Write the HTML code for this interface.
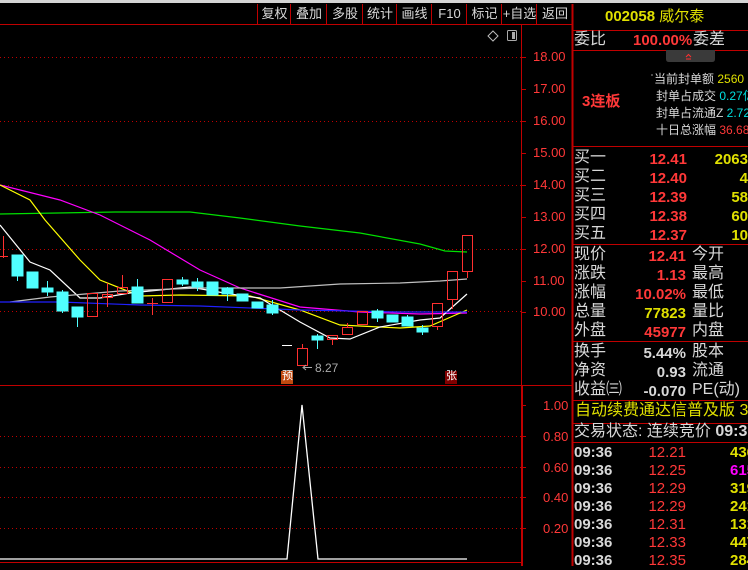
<!DOCTYPE html>
<html><head><meta charset="utf-8"><style>
*{margin:0;padding:0}
body{width:748px;height:566px;background:#000;overflow:hidden;position:relative;font-family:"Liberation Sans","Noto Sans CJK SC",sans-serif;}
.t{position:absolute;white-space:nowrap;line-height:1;}
.g{color:#d8d8d8}.r{color:#ff3838}.y{color:#e0e000}.c{color:#00e0e0}.m{color:#ff00ff}
.btn{position:absolute;top:4px;height:20px;color:#d8d8d8;font-size:13px;line-height:20px;text-align:center;border-left:1px solid #c00000}
.row{font-size:16px}
.num{font-weight:bold;font-size:15px}
</style></head><body>
<div style="position:absolute;left:0;top:0;width:748px;height:3px;background:#d4d4d4"></div>
<div class="btn" style="left:257px;width:33px">复权</div>
<div class="btn" style="left:290px;width:36px">叠加</div>
<div class="btn" style="left:326px;width:36px">多股</div>
<div class="btn" style="left:362px;width:34px">统计</div>
<div class="btn" style="left:396px;width:35px">画线</div>
<div class="btn" style="left:431px;width:35px">F10</div>
<div class="btn" style="left:466px;width:35px">标记</div>
<div class="btn" style="left:501px;width:35px">+自选</div>
<div class="btn" style="left:536px;width:36px">返回</div>
<svg width="748" height="566" style="position:absolute;left:0;top:0" xmlns="http://www.w3.org/2000/svg">
<g stroke="#c00000" fill="none">
<line x1="0" y1="24.5" x2="572" y2="24.5"/>
<line x1="521.5" y1="25" x2="521.5" y2="566"/>
<line x1="522.5" y1="385" x2="522.5" y2="566"/>
<line x1="572.5" y1="4" x2="572.5" y2="566" stroke-width="2"/>
<line x1="0" y1="385.5" x2="572" y2="385.5"/>
<line x1="0" y1="562.5" x2="521" y2="562.5"/>
<line x1="573" y1="30.5" x2="748" y2="30.5"/>
<line x1="573" y1="50.5" x2="748" y2="50.5"/>
<line x1="573" y1="146.5" x2="748" y2="146.5"/>
<line x1="573" y1="244.5" x2="748" y2="244.5"/>
<line x1="573" y1="341.5" x2="748" y2="341.5"/>
<line x1="573" y1="400.5" x2="748" y2="400.5"/>
<line x1="573" y1="423.5" x2="748" y2="423.5"/>
<line x1="573" y1="442.5" x2="748" y2="442.5"/>
</g>
<g stroke="#c00000" stroke-dasharray="1,3">
<line x1="0" y1="57.5" x2="521" y2="57.5"/><line x1="0" y1="121.5" x2="521" y2="121.5"/>
<line x1="0" y1="185.5" x2="521" y2="185.5"/><line x1="0" y1="249.5" x2="521" y2="249.5"/>
<line x1="0" y1="311.5" x2="521" y2="311.5"/>
<line x1="0" y1="436.5" x2="521" y2="436.5"/><line x1="0" y1="467.5" x2="521" y2="467.5"/>
<line x1="0" y1="497.5" x2="521" y2="497.5"/><line x1="0" y1="528.5" x2="521" y2="528.5"/>
</g>
<g stroke="#c00000">
<line x1="522" y1="57.5" x2="526" y2="57.5"/><line x1="522" y1="89.5" x2="526" y2="89.5"/><line x1="522" y1="121.5" x2="526" y2="121.5"/><line x1="522" y1="153.5" x2="526" y2="153.5"/><line x1="522" y1="185.5" x2="526" y2="185.5"/><line x1="522" y1="217.5" x2="526" y2="217.5"/><line x1="522" y1="249.5" x2="526" y2="249.5"/><line x1="522" y1="281.5" x2="526" y2="281.5"/><line x1="522" y1="312.5" x2="526" y2="312.5"/>
<line x1="522" y1="405.5" x2="526" y2="405.5"/><line x1="522" y1="436.5" x2="526" y2="436.5"/><line x1="522" y1="467.5" x2="526" y2="467.5"/><line x1="522" y1="497.5" x2="526" y2="497.5"/><line x1="522" y1="528.5" x2="526" y2="528.5"/>
</g>
<g fill="none" stroke-width="1.2">
<polyline stroke="#00e000" points="0,214 115,212 190,212 240,218 300,226 360,233 420,244 445,251 467,252"/>
<polyline stroke="#ff00ff" points="0,185 60,200 100,215 150,240 200,270 240,288 300,307 360,312 420,314 467,313"/>
<polyline stroke="#ffff00" points="0,185 30,200 45,220 80,260 100,280 140,296 180,295 250,296 300,310 340,325 400,328 430,326 467,310"/>
<polyline stroke="#ffffff" points="0,225 30,262 50,270 80,298 100,298 130,293 190,287 230,294 260,298 300,322 330,338 350,339 380,327 420,320 440,318 467,294"/>
<polyline stroke="#c0c0c0" points="10,302 50,297 120,291 200,288 280,288 340,284 400,283 440,281 467,279"/>
<polyline stroke="#2020ff" points="0,302 60,302 140,305 200,306 300,310 400,312 467,312"/>
</g>
<g fill="#50ffff" stroke="#50ffff">
<line x1="17.5" y1="255" x2="17.5" y2="281"/><rect x="12" y="255" width="11" height="21"/>
<rect x="27" y="272" width="11" height="16"/>
<line x1="47.5" y1="281" x2="47.5" y2="296"/><rect x="42" y="288" width="11" height="4"/>
<line x1="62.5" y1="290" x2="62.5" y2="313"/><rect x="57" y="292" width="11" height="19"/>
<line x1="77.5" y1="307" x2="77.5" y2="327"/><rect x="72" y="307" width="11" height="10"/>
<line x1="137.5" y1="279" x2="137.5" y2="303"/><rect x="132" y="287" width="11" height="16"/>
<line x1="182.5" y1="277" x2="182.5" y2="286"/><rect x="177" y="280" width="11" height="4"/>
<line x1="197.5" y1="278" x2="197.5" y2="291"/><rect x="192" y="282" width="11" height="5"/>
<rect x="207" y="282" width="11" height="13"/>
<line x1="227.5" y1="287" x2="227.5" y2="301"/><rect x="222" y="288" width="11" height="6"/>
<rect x="237" y="294" width="11" height="7"/>
<rect x="252" y="302" width="11" height="6"/>
<line x1="272.5" y1="300" x2="272.5" y2="315"/><rect x="267" y="305" width="11" height="8"/>
<line x1="317.5" y1="334" x2="317.5" y2="349"/><rect x="312" y="336" width="11" height="4"/>
<line x1="377.5" y1="309" x2="377.5" y2="322"/><rect x="372" y="311" width="11" height="7"/>
<rect x="387" y="315" width="11" height="7"/>
<line x1="407.5" y1="315" x2="407.5" y2="326"/><rect x="402" y="317" width="11" height="9"/>
<line x1="422.5" y1="325" x2="422.5" y2="335"/><rect x="417" y="328" width="11" height="4"/>
</g>
<g fill="none" stroke="#ff3030">
<line x1="3.5" y1="236" x2="3.5" y2="258"/><line x1="0" y1="256.5" x2="8" y2="256.5"/>
<rect x="87.5" y="293.5" width="10" height="23"/>
<line x1="107.5" y1="283" x2="107.5" y2="307"/><rect x="102.5" y="294.5" width="10" height="3"/>
<line x1="122.5" y1="275" x2="122.5" y2="287"/><rect x="117.5" y="287.5" width="10" height="6"/>
<line x1="152.5" y1="298" x2="152.5" y2="315"/><line x1="147" y1="303.5" x2="158" y2="303.5"/>
<rect x="162.5" y="279.5" width="10" height="23"/>
<line x1="302.5" y1="344" x2="302.5" y2="348"/><rect x="297.5" y="348.5" width="10" height="17"/>
<line x1="332.5" y1="339" x2="332.5" y2="345"/><rect x="327.5" y="335.5" width="10" height="4"/>
<line x1="347.5" y1="323" x2="347.5" y2="327"/><rect x="342.5" y="327.5" width="10" height="7"/>
<rect x="357.5" y="311.5" width="10" height="13"/>
<line x1="437.5" y1="326" x2="437.5" y2="330"/><rect x="432.5" y="303.5" width="10" height="23"/>
<line x1="452.5" y1="299" x2="452.5" y2="309"/><rect x="447.5" y="271.5" width="10" height="28"/>
<line x1="467.5" y1="271" x2="467.5" y2="278"/><rect x="462.5" y="235.5" width="10" height="36"/>
</g>
<line x1="282" y1="345.5" x2="292" y2="345.5" stroke="#fff"/>
<line x1="304" y1="367.5" x2="312" y2="367.5" stroke="#aaa"/><polyline points="306,365 303,367.5 306,370" fill="none" stroke="#aaa"/>
<rect x="281" y="371" width="12" height="13" fill="#c04a10"/>
<rect x="445" y="371" width="12" height="13" fill="#800000"/>
<polyline fill="none" stroke="#fff" stroke-width="1.3" points="0,559 287,559 302,405 318,559 467,559"/>
<path d="M493 31 l5 5 -5 5 -5 -5z" fill="none" stroke="#bbb"/>
<rect x="507.5" y="30.5" width="9" height="10" rx="1" fill="none" stroke="#aaa"/><rect x="512" y="32" width="3" height="7" fill="#aaa"/>
<path d="M666 50 h49 v9 q0 3 -3 3 h-43 q-3 0 -3 -3z" fill="#3a3a3a"/>
<polyline points="686,57 688.5,54.5 691,57" fill="none" stroke="#ff3030"/>
<line x1="686" y1="59" x2="691" y2="59" stroke="#ff3030"/>
</svg>
<div class="t r" style="left:533px;top:50px;font-size:13px">18.00</div>
<div class="t r" style="left:533px;top:82px;font-size:13px">17.00</div>
<div class="t r" style="left:533px;top:114px;font-size:13px">16.00</div>
<div class="t r" style="left:533px;top:146px;font-size:13px">15.00</div>
<div class="t r" style="left:533px;top:178px;font-size:13px">14.00</div>
<div class="t r" style="left:533px;top:210px;font-size:13px">13.00</div>
<div class="t r" style="left:533px;top:242px;font-size:13px">12.00</div>
<div class="t r" style="left:533px;top:274px;font-size:13px">11.00</div>
<div class="t r" style="left:533px;top:305px;font-size:13px">10.00</div>
<div class="t r" style="left:543px;top:399px;font-size:13px">1.00</div>
<div class="t r" style="left:543px;top:430px;font-size:13px">0.80</div>
<div class="t r" style="left:543px;top:461px;font-size:13px">0.60</div>
<div class="t r" style="left:543px;top:491px;font-size:13px">0.40</div>
<div class="t r" style="left:543px;top:522px;font-size:13px">0.20</div>
<div class="t" style="left:315px;top:362px;font-size:12px;color:#aaa">8.27</div>
<div class="t" style="left:282px;top:371px;font-size:11px;color:#fff">预</div>
<div class="t" style="left:446px;top:371px;font-size:11px;color:#fff">张</div>

<div class="t y" style="left:605px;top:9px;font-size:15px"><b>002058</b> 威尔泰</div>
<div class="t g row" style="left:574px;top:32px">委比</div>
<div class="t r num" style="left:633px;top:33px">100.00%</div>
<div class="t g row" style="left:693px;top:32px">委差</div>
<div class="t r" style="left:582px;top:94px;font-size:15px;font-weight:bold">3连板</div>
<div class="t g" style="left:650px;top:73px;font-size:12px">ˈ当前封单额 <span class="y">2560</span></div>
<div class="t g" style="left:656px;top:90px;font-size:12px">封单占成交 <span class="c">0.27亿</span></div>
<div class="t g" style="left:656px;top:107px;font-size:12px">封单占流通Z <span class="c">2.72</span></div>
<div class="t g" style="left:656px;top:124px;font-size:12px">十日总涨幅 <span class="r">36.68</span></div>

<div style="position:absolute;left:574px;top:150px;width:174px">
<div style="position:relative;height:19px"><span class="t g row" style="left:0;top:0">买一</span><span class="t r num" style="right:61px;top:2px">12.41</span><span class="t y num" style="right:0;top:2px">2063</span></div>
<div style="position:relative;height:19px"><span class="t g row" style="left:0;top:0">买二</span><span class="t r num" style="right:61px;top:2px">12.40</span><span class="t y num" style="right:0;top:2px">4</span></div>
<div style="position:relative;height:19px"><span class="t g row" style="left:0;top:0">买三</span><span class="t r num" style="right:61px;top:2px">12.39</span><span class="t y num" style="right:0;top:2px">58</span></div>
<div style="position:relative;height:19px"><span class="t g row" style="left:0;top:0">买四</span><span class="t r num" style="right:61px;top:2px">12.38</span><span class="t y num" style="right:0;top:2px">60</span></div>
<div style="position:relative;height:19px"><span class="t g row" style="left:0;top:0">买五</span><span class="t r num" style="right:61px;top:2px">12.37</span><span class="t y num" style="right:0;top:2px">10</span></div>
</div>
<div style="position:absolute;left:574px;top:247px;width:174px">
<div style="position:relative;height:19px"><span class="t g row" style="left:0;top:0">现价</span><span class="t r num" style="right:62px;top:2px">12.41</span><span class="t g row" style="left:118px;top:0">今开</span></div>
<div style="position:relative;height:19px"><span class="t g row" style="left:0;top:0">涨跌</span><span class="t r num" style="right:62px;top:2px">1.13</span><span class="t g row" style="left:118px;top:0">最高</span></div>
<div style="position:relative;height:19px"><span class="t g row" style="left:0;top:0">涨幅</span><span class="t r num" style="right:62px;top:2px">10.02%</span><span class="t g row" style="left:118px;top:0">最低</span></div>
<div style="position:relative;height:19px"><span class="t g row" style="left:0;top:0">总量</span><span class="t y num" style="right:62px;top:2px">77823</span><span class="t g row" style="left:118px;top:0">量比</span></div>
<div style="position:relative;height:19px"><span class="t g row" style="left:0;top:0">外盘</span><span class="t r num" style="right:62px;top:2px">45977</span><span class="t g row" style="left:118px;top:0">内盘</span></div>
</div>
<div style="position:absolute;left:574px;top:344px;width:174px">
<div style="position:relative;height:19px"><span class="t g row" style="left:0;top:0">换手</span><span class="t g num" style="right:62px;top:2px">5.44%</span><span class="t g row" style="left:118px;top:0">股本</span></div>
<div style="position:relative;height:19px"><span class="t g row" style="left:0;top:0">净资</span><span class="t g num" style="right:62px;top:2px">0.93</span><span class="t g row" style="left:118px;top:0">流通</span></div>
<div style="position:relative;height:19px"><span class="t g row" style="left:0;top:0">收益㈢</span><span class="t g num" style="right:62px;top:2px">-0.070</span><span class="t g row" style="left:118px;top:0">PE(动)</span></div>
</div>
<div class="t y row" style="left:575px;top:403px">自动续费通达信普及版 3</div>
<div class="t g row" style="left:574px;top:424px">交易状态: 连续竞价 <b>09:36</b></div>
<div style="position:absolute;left:574px;top:444px;width:174px">
<div style="position:relative;height:18px"><span class="t g num" style="left:0;top:1px">09:36</span><span class="t r num" style="right:62px;top:1px;font-weight:normal">12.21</span><span class="t y num" style="left:156px;top:1px">436</span></div>
<div style="position:relative;height:18px"><span class="t g num" style="left:0;top:1px">09:36</span><span class="t r num" style="right:62px;top:1px;font-weight:normal">12.25</span><span class="t m num" style="left:156px;top:1px">615</span></div>
<div style="position:relative;height:18px"><span class="t g num" style="left:0;top:1px">09:36</span><span class="t r num" style="right:62px;top:1px;font-weight:normal">12.29</span><span class="t y num" style="left:156px;top:1px">319</span></div>
<div style="position:relative;height:18px"><span class="t g num" style="left:0;top:1px">09:36</span><span class="t r num" style="right:62px;top:1px;font-weight:normal">12.29</span><span class="t y num" style="left:156px;top:1px">241</span></div>
<div style="position:relative;height:18px"><span class="t g num" style="left:0;top:1px">09:36</span><span class="t r num" style="right:62px;top:1px;font-weight:normal">12.31</span><span class="t y num" style="left:156px;top:1px">131</span></div>
<div style="position:relative;height:18px"><span class="t g num" style="left:0;top:1px">09:36</span><span class="t r num" style="right:62px;top:1px;font-weight:normal">12.33</span><span class="t y num" style="left:156px;top:1px">447</span></div>
<div style="position:relative;height:18px"><span class="t g num" style="left:0;top:1px">09:36</span><span class="t r num" style="right:62px;top:1px;font-weight:normal">12.35</span><span class="t y num" style="left:156px;top:1px">284</span></div>
</div>
</body></html>
